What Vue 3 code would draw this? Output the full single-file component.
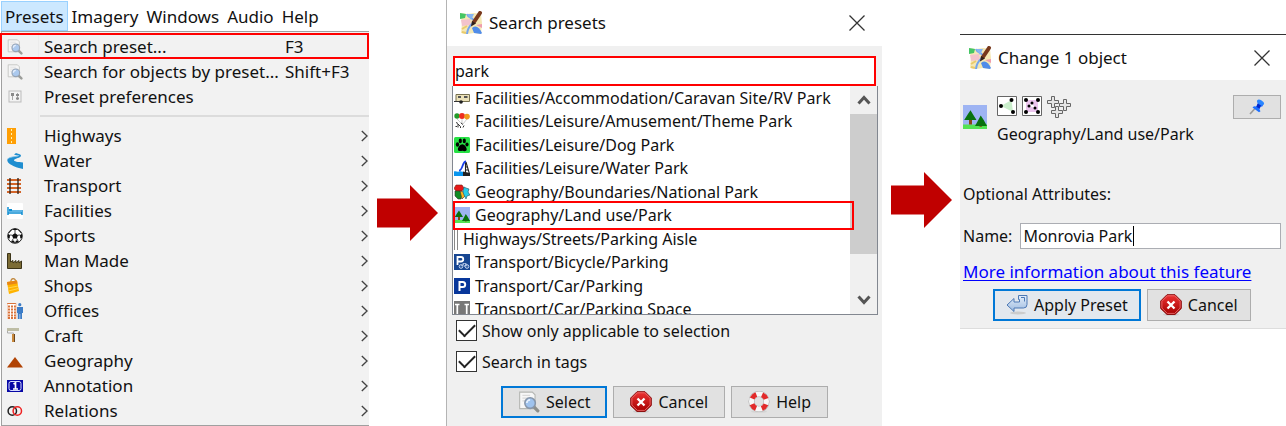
<script setup>
import { ref } from 'vue'

const menus = ['Presets', 'Imagery', 'Windows', 'Audio', 'Help']
const actions = [
  { label: 'Search preset...', key: 'F3', icon: 'search', marked: true },
  { label: 'Search for objects by preset...', key: 'Shift+F3', icon: 'search' },
  { label: 'Preset preferences', key: '', icon: 'prefs' },
]
const groups = [
  { label: 'Highways', icon: 'highway' },
  { label: 'Water', icon: 'water' },
  { label: 'Transport', icon: 'rail' },
  { label: 'Facilities', icon: 'bed' },
  { label: 'Sports', icon: 'ball' },
  { label: 'Man Made', icon: 'factory' },
  { label: 'Shops', icon: 'bag' },
  { label: 'Offices', icon: 'office' },
  { label: 'Craft', icon: 'roller' },
  { label: 'Geography', icon: 'peak' },
  { label: 'Annotation', icon: 'note' },
  { label: 'Relations', icon: 'rings' },
]
const results = [
  { label: 'Facilities/Accommodation/Caravan Site/RV Park', icon: 'caravan' },
  { label: 'Facilities/Leisure/Amusement/Theme Park', icon: 'balloons' },
  { label: 'Facilities/Leisure/Dog Park', icon: 'paw' },
  { label: 'Facilities/Leisure/Water Park', icon: 'slide' },
  { label: 'Geography/Boundaries/National Park', icon: 'national' },
  { label: 'Geography/Land use/Park', icon: 'park', marked: true },
  { label: 'Highways/Streets/Parking Aisle', icon: 'aisle' },
  { label: 'Transport/Bicycle/Parking', icon: 'bikepark' },
  { label: 'Transport/Car/Parking', icon: 'carpark' },
  { label: 'Transport/Car/Parking Space', icon: 'space' },
]

const query = ref('park')
const applicable = ref(true)
const inTags = ref(true)
const name = ref('Monrovia Park')
</script>

<template>
  <svg class="defs" aria-hidden="true">
    <defs>
      <linearGradient id="sea" x1="0" y1="0" x2="0" y2="1">
        <stop offset="0" stop-color="#e33" /><stop offset="1" stop-color="#a40000" />
      </linearGradient>
      <linearGradient id="steel" x1="0" y1="0" x2="0" y2="1">
        <stop offset="0" stop-color="#e4eefa" /><stop offset="1" stop-color="#9dbbe0" />
      </linearGradient>
      <symbol id="search" viewBox="0 0 20 20">
        <path d="M1.500 1H13l2.500 2.500V16H1.500z" fill="#f7f7f7" stroke="#b5b7b3" />
        <path d="M4 4h7M4 6.500h8M4 9h3" stroke="#dadada" />
        <path d="M14.500 14.500l3.500 3.500" stroke="#8d8f8b" stroke-width="3" stroke-linecap="round" />
        <circle cx="11" cy="11" r="4.800" fill="#9fc3ee" stroke="#8796aa" stroke-width="1.400" />
        <path d="M8 11a3 3 0 0 1 3-3" fill="none" stroke="#e6f1ff" stroke-width="1.500" />
      </symbol>
      <symbol id="prefs" viewBox="0 0 16 16">
        <rect x="2" y="2" width="12" height="11" fill="#f4f4f4" stroke="#b3b3b3" />
        <path d="M5.500 4v7M10.500 4v7" stroke="#999" />
        <path d="M4 4h3v3H4zM9 5h3v2H9zM9 8.500h3v2H9z" fill="#777" />
      </symbol>
      <symbol id="highway" viewBox="0 0 16 16">
        <path d="M0 0h9v16H0z" fill="#ff9f05" />
        <path d="M4.500 1v15" stroke="#fff3b0" stroke-dasharray="2 2" />
      </symbol>
      <symbol id="water" viewBox="0 0 16 16">
        <path d="M9 0 7 1.500C9 2.500 11 2 12 2.800 9 4 1 3.500.3 7 0 10 5 12.500 10 14.500l6 1.500V9.500C11 9 6.500 8.500 7 7c.8-1.800 7-1.800 7-4.500C13.500.8 10.500 1 9 0z" fill="#1f8ed0" />
        <path d="M.5 6C3 3.500 8 4 12 2.500" stroke="#7bc0e8" fill="none" stroke-width=".8" />
      </symbol>
      <symbol id="rail" viewBox="0 0 16 16">
        <path d="M0 2h14M0 6h14M0 10h14M0 14h14" stroke="#d36529" stroke-width="2" />
        <path d="M3 0v16M11 0v16" stroke="#2c1d15" stroke-width="1.300" />
      </symbol>
      <symbol id="bed" viewBox="0 0 16 16">
        <rect width="16" height="16" rx="1" fill="#fff" />
        <path d="M1 4v8M15 7v5M1 10h14" stroke="#0f8ed2" stroke-width="1.500" />
        <path d="M2 7h13v2H2z" fill="#5db4e4" /><path d="M2 6h3v2H2z" fill="#0f8ed2" />
      </symbol>
      <symbol id="ball" viewBox="0 0 16 16">
        <circle cx="8" cy="8" r="7.300" fill="#fff" stroke="#222" />
        <path d="M8 5l3 2.200-1.200 3.400H6.200L5 7.200zM5 1.200 8 2.500l3-1.300L8 .5zM1 6l2 1-.3 3.500L1 10zM15 6l-2 1 .3 3.500L15 10zM4 13l3-.5 1 2.500-3-.6zM12 13l-3-.5L8 15l3-.6z" fill="#111" />
        <path d="M8 5V2.500M5 7.200 3 7M11 7.200l2-.2M6.200 10.600 5 13M9.800 10.600 11 13M5 1.500 2 5M11 1.500 14 5" stroke="#222" stroke-width=".8" />
      </symbol>
      <symbol id="factory" viewBox="0 0 16 16">
        <path d="M.5.500h3V9L6 7.500V10l3-2.500V10l3-2.500V10l2.500-2v7.500H.5z" fill="#7c6c35" stroke="#3c3418" />
      </symbol>
      <symbol id="bag" viewBox="0 0 16 16">
        <path d="M4 5C3 0 8-1 9 4" fill="none" stroke="#c28a41" stroke-width="1.300" />
        <path d="M0 4l10-1.500L12 13 2 16z" fill="#ffb300" /><path d="M0 4l10-1.500.4 3L.5 7z" fill="#e88617" />
        <path d="M1 10l10-2M1.500 13l10-2.500" stroke="#ffd44c" />
      </symbol>
      <symbol id="office" viewBox="0 0 16 16">
        <path d="M0 0h9v16H0z" fill="#fff" />
        <path d="M0 .5h9" stroke="#d9733b" />
        <path d="M1 3.500h8M1 6.500h8M1 9.500h8M1 12.500h8M1 15h8" stroke="#d9733b" stroke-width="1.800" stroke-dasharray="2 1" />
        <path d="M.3 0v16M9 0v16" stroke="#e9a27a" stroke-width=".6" />
        <circle cx="12.800" cy="1.700" r="1.600" fill="#3c7cc7" /><path d="M10 4h6v6h-1v6h-1.800v-5h-.6v5h-1.800v-6H10z" fill="#3c7cc7" />
      </symbol>
      <symbol id="roller" viewBox="0 0 16 16">
        <path d="M0 0h12v3H0z" fill="#bebda5" /><path d="M.5 3v2h6v2" fill="none" stroke="#aaa" />
        <path d="M5 6h3v8H5z" fill="#c9893c" /><path d="M7 6h1v8H7z" fill="#69451e" />
      </symbol>
      <symbol id="peak" viewBox="0 0 16 16"><path d="M8 4l8 10.500H0z" fill="#b14304" /></symbol>
      <symbol id="note" viewBox="0 0 16 16">
        <path d="M0 2h16v12H0z" fill="#0707a5" />
        <rect x="2" y="3.500" width="12" height="9" rx="2" fill="none" stroke="#d8dcff" />
        <path d="M6.500 6 8.500 5v6M6 11h5" fill="none" stroke="#fff" stroke-width="1.700" />
      </symbol>
      <symbol id="rings" viewBox="0 0 16 16">
        <circle cx="5.300" cy="8" r="4.200" fill="none" stroke="#222" stroke-width="1.500" />
        <circle cx="10.300" cy="8" r="4.200" fill="none" stroke="#ef2222" stroke-width="1.500" />
      </symbol>
      <symbol id="caravan" viewBox="0 0 16 16">
        <path d="M2 4.500h13.500v7H2z" fill="#ebe1b8" stroke="#77704f" /><path d="M4 6h3v2H4zM10 6h3.500v2H10z" fill="#555" />
        <path d="M0 11.500h9" stroke="#333" /><circle cx="7" cy="12" r="1.800" fill="#222" />
      </symbol>
      <symbol id="balloons" viewBox="0 0 16 16">
        <path d="M3 6l4 4M8 6v4M13 6l-4 5" fill="none" stroke="#aaa" stroke-width=".6" />
        <circle cx="3" cy="3" r="2.700" fill="#239b2a" /><circle cx="8" cy="3" r="3" fill="#ed2e20" /><circle cx="13" cy="3.600" r="2.800" fill="#ee9c1c" />
        <path d="M2 9.500l2 1M4 14.500V11l2.500 2.500V15M7 10l2 1.500M1.500 13.500h1.500M9 14.500l1-2" fill="none" stroke="#333" />
      </symbol>
      <symbol id="paw" viewBox="0 0 16 16">
        <rect width="16" height="16" rx="1.500" fill="#26e044" />
        <ellipse cx="3.500" cy="7.500" rx="1.700" ry="2.200" /><ellipse cx="6.300" cy="3.900" rx="1.600" ry="2.300" /><ellipse cx="10.300" cy="3.900" rx="1.600" ry="2.300" /><ellipse cx="13" cy="7.500" rx="1.600" ry="2.100" />
        <path d="M8.300 7.200c2 0 4.400 3 4.400 5 0 2.500-2.700 2-4.400 1.600-1.600.4-4.400.7-4.400-1.600 0-2 2.400-5 4.400-5z" />
      </symbol>
      <symbol id="slide" viewBox="0 0 16 16">
        <path d="M12 2l3.500 12M11.500 2v11M12 7h2M12 10h2.500" fill="none" stroke="#222" stroke-width="1.100" />
        <path d="M5 10.500C9 10.500 8 1.500 12 1.500" fill="none" stroke="#183fe6" stroke-width="1.800" />
        <path d="M0 11.500c2-1 3 1 5 0s3 1 4 0V16H0z" fill="#0895ee" /><path d="M9 11.500l7 1.500v3H9z" fill="#222" />
      </symbol>
      <symbol id="national" viewBox="0 0 16 16">
        <path d="M2 1h6l2 3-2 3H2L0 4.500z" fill="#e51919" stroke="#721" stroke-width=".6" />
        <path d="M1 7h5l2 3-1 5H4L1 12z" fill="#108c24" stroke="#333" stroke-width=".6" />
        <path d="M6 7l4 1 1 4-3 3z" fill="#ffb21c" stroke="#333" stroke-width=".6" />
        <path d="M10 3l2 1 3 1-1 3 2 3-3 1-1 3-2-4-1-3z" fill="#27cce8" stroke="#256" stroke-width=".6" />
      </symbol>
      <symbol id="park" viewBox="0 0 16 16">
        <path d="M0 0h16v16H0z" fill="#9eb4f3" /><path d="M0 13h16v3H0z" fill="#53e353" />
        <path d="M4 9h2v4H4zM11 12h1.600v2.500H11z" fill="#8a4513" />
        <path d="M5 3.500l1.700 2.800L9 10H.8l2.300-3.700zM11.800 7l2 3L16 14H8l2.200-4z" fill="#08720e" />
      </symbol>
      <symbol id="aisle" viewBox="0 0 4 22"><path d="M.5 0v22M3.500 0v22" stroke="#888" /></symbol>
      <symbol id="bikepark" viewBox="0 0 16 16">
        <path d="M0 0h16v16H0z" fill="#174692" />
        <path d="M3.500 11V3H7a2 2 0 0 1 0 4.500H4" fill="none" stroke="#fff" stroke-width="1.800" />
        <circle cx="7" cy="12.500" r="1.800" fill="none" stroke="#c9d9f2" /><circle cx="13" cy="12.500" r="1.800" fill="none" stroke="#c9d9f2" />
        <path d="M7 12.500l2-3h3l1 3M9 9.500l1.500 3 1.500-3" fill="none" stroke="#c9d9f2" stroke-width=".7" />
      </symbol>
      <symbol id="carpark" viewBox="0 0 16 16">
        <path d="M0 0h16v16H0z" fill="#08379b" />
        <path d="M5.500 13V4h3.200a2.300 2.300 0 0 1 0 5H6" fill="none" stroke="#fff" stroke-width="2" />
      </symbol>
      <symbol id="space" viewBox="0 0 16 16">
        <path d="M0 0h16v16H0z" fill="#777" /><path d="M1 3.500h4.500M10.500 3.500H15M3.300 3v13M12.700 3v13" stroke="#fff" stroke-width="1.700" />
      </symbol>
      <symbol id="logo" viewBox="0 0 24 24">
        <path d="M1 2l7 1 7-1 7 1 1 9-1 11-7-1-7 1-6-1 1-10z" fill="#f5e8b4" />
        <path d="M1 2l6 1-1 4-5 1z" fill="#45c665" /><path d="M2 9l9-1 1 6-9 1z" fill="#f3c3cc" />
        <path d="M8 3c1 4 7 4 7 7s-6 3-7 13" fill="none" stroke="#72a4ee" stroke-width="2" />
        <path d="M8 3h7l-3 6z" fill="#86b4f0" />
        <path d="M13 17c4-3 7-1 10 5l-1 1-7-1z" fill="#508ce9" /><path d="M17 14l6-1v4z" fill="#ef9dac" />
        <path d="M3 18l5-3M3 21l4 1" stroke="#eacb6c" stroke-width="2" />
        <path d="M21 2 15 11" stroke="#78381c" stroke-width="4" stroke-linecap="round" /><path d="M13 10l4 2.500-5 3z" fill="#302019" />
      </symbol>
      <symbol id="close" viewBox="0 0 16 16"><path d="M.5.5l15 15M15.500.5l-15 15" stroke="#333" stroke-width="1.300" /></symbol>
      <symbol id="stop" viewBox="0 0 22 22">
        <ellipse cx="11" cy="20.500" rx="8" ry="1.300" fill="#ccc" />
        <path d="M7 .7h8l6.300 6.300v7.500L15 20.500H7L.7 14.500V7z" fill="url(#sea)" stroke="#8c1010" />
        <path d="M7.400 1.800h7.200l5.500 5.500v6.700l-5.500 5.400H7.400L1.900 14V7.300z" fill="none" stroke="#ee7474" stroke-width=".8" />
        <path d="M7.500 7.500l7 7M14.500 7.500l-7 7" stroke="#fff" stroke-width="2.300" />
      </symbol>
      <symbol id="buoy" viewBox="0 0 22 22">
        <ellipse cx="11" cy="20.500" rx="8" ry="1.300" fill="#d4d4d4" />
        <circle cx="11" cy="10.500" r="7.500" fill="none" stroke="#aaa" stroke-width="6" />
        <circle cx="11" cy="10.500" r="7.500" fill="none" stroke="#f7f7f7" stroke-width="5" />
        <circle cx="11" cy="10.500" r="7.500" fill="none" stroke="#e22a2a" stroke-width="5" stroke-dasharray="5.890" stroke-dashoffset="-2.950" />
      </symbol>
      <symbol id="enter" viewBox="0 0 22 22">
        <ellipse cx="12" cy="19" rx="8" ry="1.500" fill="#ccc" />
        <path d="M1 11 8 4.500V8h5.500V5.500H12.500V1.500H21V10.500a3.500 3.500 0 0 1-3.500 3.500H8v3.500z" fill="url(#steel)" stroke="#4d79b5" stroke-linejoin="round" />
        <path d="M15 3.500h3.500v4" fill="none" stroke="#4d79b5" />
      </symbol>
      <symbol id="pin" viewBox="0 0 16 16">
        <path d="M1 15l5-5.500" stroke="#999" stroke-width="1.600" />
        <path d="M8.500 1.500 14.500 5l-1.200 2.500-1.800.2-1 2.800 1 1.800-1.500 1L3.500 8.500 5 7.300l2 .2 1.800-2.400z" fill="#1c6fff" />
        <ellipse cx="11.500" cy="3.300" rx="3.800" ry="2.200" transform="rotate(30 11.500 3.300)" fill="#2b86ff" />
        <path d="M8.500 4.500l3.500 2-1.500 3-3-1.500z" fill="#0525c9" />
      </symbol>
      <symbol id="closedway" viewBox="0 0 20 20">
        <path d="M.5.5h19v19H.5z" fill="#fff" stroke="#666" /><path d="M4 10 14.500 4l1.500 12z" fill="#caeecb" />
        <circle cx="4" cy="10" r="2" /><circle cx="14.500" cy="4" r="2" /><circle cx="16" cy="16" r="2" />
      </symbol>
      <symbol id="multipolygon" viewBox="0 0 20 20">
        <path d="M.5.5h19v19H.5z" fill="#fff" stroke="#666" /><path d="M4 4h12v12H4z" fill="#ecc5ee" />
        <path d="M10 7l3 5-6-2z" fill="#fff" />
        <circle cx="4" cy="4" r="2" /><circle cx="16" cy="4" r="2" /><circle cx="4" cy="16" r="2" /><circle cx="16" cy="16" r="2" />
        <circle cx="10" cy="7" r="1.500" /><circle cx="7" cy="10" r="1.500" /><circle cx="13" cy="12" r="1.500" />
      </symbol>
      <symbol id="crosses" viewBox="0 0 24 22">
        <g fill="#e6e6e6" stroke="#666">
          <path d="M4.500.5h3v4h4v3h-4v4h-3v-4h-4v-3h4z" />
          <path d="M16.500 3.500h3v4h4v3h-4v4h-3v-4h-4v-3h4z" />
          <path d="M8.500 10.500h3v4h4v3h-4v4h-3v-4h-4v-3h4z" />
        </g>
      </symbol>
    </defs>
  </svg>

  <main class="stage">
    <section class="app-menu">
      <nav class="menubar">
        <button v-for="(m, i) in menus" :key="m" type="button" :class="{ open: i === 0 }">{{ m }}</button>
      </nav>
      <div class="menu" role="menu">
        <button v-for="a in actions" :key="a.label" type="button" role="menuitem" class="item" :class="{ marked: a.marked }">
          <svg class="i16 faded"><use :href="'#' + a.icon" /></svg>
          <span class="label">{{ a.label }}</span>
          <span class="key">{{ a.key }}</span>
        </button>
        <hr />
        <button v-for="g in groups" :key="g.label" type="button" role="menuitem" class="item">
          <svg class="i16"><use :href="'#' + g.icon" /></svg>
          <span class="label">{{ g.label }}</span>
          <svg class="more" viewBox="0 0 6 10"><path d="M.7.700 5.200 5 .7 9.300" fill="none" stroke="#444" stroke-width="1.200" /></svg>
        </button>
      </div>
    </section>

    <svg class="arrow" viewBox="0 0 61 56"><path d="M0 13.500h33V0l28 28-28 28V42.500H0z" fill="#c00000" /></svg>

    <section class="dialog search" aria-label="Search presets">
      <header class="title">
        <svg class="i24"><use href="#logo" /></svg>
        <h2>Search presets</h2>
        <button type="button" class="close" aria-label="Close"><svg><use href="#close" /></svg></button>
      </header>
      <div class="body">
        <input v-model="query" class="query" type="text" aria-label="Search presets" />
        <div class="listbox">
          <ul role="listbox" aria-label="Presets">
            <li v-for="r in results" :key="r.label" role="option" :aria-selected="!!r.marked" :class="{ marked: r.marked }">
              <svg :class="r.icon === 'aisle' ? 'thin' : 'i16'"><use :href="'#' + r.icon" /></svg>
              <span>{{ r.label }}</span>
            </li>
          </ul>
          <div class="scroll">
            <button type="button" aria-label="Scroll up"><svg viewBox="0 0 14 10"><path d="M1.500 8.500 7 2.500l5.500 6" fill="none" stroke="#555" stroke-width="3" /></svg></button>
            <div class="thumb"></div>
            <button type="button" class="down" aria-label="Scroll down"><svg viewBox="0 0 14 10"><path d="M1.500 1.500 7 7.500l5.500-6" fill="none" stroke="#555" stroke-width="3" /></svg></button>
          </div>
        </div>
        <label class="check"><input v-model="applicable" type="checkbox" />Show only applicable to selection</label>
        <label class="check"><input v-model="inTags" type="checkbox" />Search in tags</label>
        <footer class="buttons">
          <button type="button" class="push primary"><svg><use href="#search" /></svg>Select</button>
          <button type="button" class="push"><svg><use href="#stop" /></svg>Cancel</button>
          <button type="button" class="push"><svg><use href="#buoy" /></svg>Help</button>
        </footer>
      </div>
    </section>

    <svg class="arrow second" viewBox="0 0 61 56"><path d="M0 13.500h33V0l28 28-28 28V42.500H0z" fill="#c00000" /></svg>

    <section class="dialog change" aria-label="Change 1 object">
      <header class="title">
        <svg class="i24"><use href="#logo" /></svg>
        <h2>Change 1 object</h2>
        <button type="button" class="close" aria-label="Close"><svg><use href="#close" /></svg></button>
      </header>
      <div class="body">
        <div class="preset">
          <svg class="i24"><use href="#park" /></svg>
          <div class="about">
            <div class="types">
              <svg class="i20"><use href="#closedway" /></svg>
              <svg class="i20"><use href="#multipolygon" /></svg>
              <svg class="cross"><use href="#crosses" /></svg>
            </div>
            <p>Geography/Land use/Park</p>
          </div>
          <button type="button" class="pin" aria-label="Pin"><svg class="i16"><use href="#pin" /></svg></button>
        </div>
        <p class="optional">Optional Attributes:</p>
        <div class="field">
          <label for="name">Name:</label>
          <div class="entry">
            <input id="name" v-model="name" type="text" />
            <i class="caret"></i>
          </div>
        </div>
        <a href="#more" class="info">More information about this feature</a>
        <footer class="buttons">
          <button type="button" class="push primary"><svg><use href="#enter" /></svg>Apply Preset</button>
          <button type="button" class="push"><svg><use href="#stop" /></svg>Cancel</button>
        </footer>
      </div>
    </section>
  </main>
</template>

<style>
body { background: #fff; }
</style>

<style scoped>
* { box-sizing: border-box; }
.defs { position: absolute; width: 0; height: 0; }
button, input { font: inherit; color: inherit; margin: 0; padding: 0; border: 0; background: none; border-radius: 0; outline: none; }
h2, p, ul { margin: 0; padding: 0; }
svg { display: block; flex: none; }
.i16 { width: 16px; height: 16px; }
.i20 { width: 20px; height: 20px; }
.i24 { width: 24px; height: 24px; }

.stage {
  display: grid;
  grid-template-columns: minmax(0, 369fr) 61px minmax(0, 437fr) 61px minmax(0, 326fr);
  gap: 8px;
  align-items: start;
  font: 16px/24px "Noto Sans", "Open Sans", sans-serif;
  color: #111;
  overflow: hidden;
}

.app-menu { padding-left: 1px; font-size: 17px; }
.menubar { display: flex; height: 32px; padding-top: 1px; border-bottom: 1px solid #a0a0a0; }
.menubar button { height: 30px; padding: 0 3px; border: 1px solid transparent; line-height: 30px; }
.menubar .open { background: #cce8ff; border-color: #99d1ff; }
.menu {
  padding: 2px 0;
  border: solid #a0a0a0;
  border-width: 0 0 1px 1px;
  background: linear-gradient(90deg, #f2f2f2 36px, #ececec 36px 37px, #f2f2f2 37px);
}
.item { display: flex; align-items: center; width: 100%; height: 25px; padding: 0 1px 0 5px; text-align: left; position: relative; }
.label { flex: 1; margin-left: 21px; white-space: nowrap; }
.key { width: 83px; white-space: nowrap; }
.more { width: 7px; height: 12px; }
.faded { opacity: .85; }
.marked::after { content: ""; position: absolute; inset: -1px 0 0 -2px; border: 2px solid #f00; pointer-events: none; }
hr { height: 2px; margin: 6px 0 6px 38px; border: 0; background: #dcdcdc; }

.arrow { width: 61px; height: 56px; margin-top: 185px; }
.second { margin-top: 172px; }

.title { display: flex; align-items: center; height: 46px; background: #fff; padding: 0 17px 0 12px; }
.title h2 { flex: 1; margin-left: 6px; font-size: 17px; font-weight: 400; }
.close svg { width: 16px; height: 16px; }
.dialog .body { background: #f0f0f0; }

.search { margin-right: 1px; border-left: 1px solid #b4b4b4; }
.search .body { padding: 10px 4px 8px 5px; }
.query { display: block; width: calc(100% - 3px); height: 30px; margin-left: 1px; border: 2px solid #f00; background: #fff; }
.listbox { display: flex; height: 229px; border: solid #828790; border-width: 0 1px 1px; background: #fff; overflow: hidden; }
ul { flex: 1; display: grid; grid-template-rows: repeat(10, minmax(0, 1fr)); height: 235px; list-style: none; min-width: 0; line-height: 22px; }
li { display: flex; align-items: center; gap: 5px; padding-left: 1px; white-space: nowrap; position: relative; }
li.marked::after { inset: -3px -4px -3px 0; z-index: 1; }
.thin { width: 4px; height: 22px; }
.scroll { display: flex; flex-direction: column; width: 27px; background: #f0f0f0; }
.scroll button { height: 28px; display: grid; place-items: center; }
.scroll svg { width: 14px; height: 10px; }
.thumb { height: 140px; background: #cdcdcd; }
.scroll .down { margin-top: auto; }
.check { display: flex; align-items: center; gap: 5px; height: 31px; margin-left: 4px; }
.check input { appearance: none; width: 21px; height: 21px; border: 1px solid #333; background: #fff; display: grid; place-items: center; }
.check input:checked::before { content: ""; width: 14px; height: 7px; border: solid #222; border-width: 0 0 2px 2px; rotate: -45deg; translate: 0 -2px; }
.buttons { display: flex; gap: 6px; }
.search .buttons { padding: 9px 0 0 49px; }
.push { display: flex; align-items: center; gap: 6px; height: 32px; padding: 0 16px; border: 1px solid #adadad; background: #e1e1e1; white-space: nowrap; }
.push.primary { border: 2px solid #0078d7; padding: 0 15px; }
.push svg { width: 22px; height: 22px; }

.change { margin-top: 34px; border-top: 1px solid #333; border-bottom: 1px solid #ddd; }
.change .title { height: 45px; padding: 0 16px 0 8px; }
.change .body { padding: 15px 5px 7px 3px; }
.preset { display: flex; align-items: flex-start; }
.preset > .i24 { margin-top: 10px; }
.about { flex: 1; margin-left: 10px; }
.types { display: flex; gap: 5px; height: 27px; padding-top: 1px; }
.cross { width: 24px; height: 22px; }
.pin { display: grid; place-items: center; width: 48px; height: 24px; border: 1px solid #adadad; background: #e1e1e1; }
.optional { margin-top: 36px; }
.field { display: flex; align-items: center; gap: 8px; margin-top: 17px; }
.entry { flex: 1; position: relative; }
.entry input { display: block; width: 100%; height: 26px; padding: 0 2px; border: 1px solid #abadb3; background: #fff; }
.caret { position: absolute; left: 113px; top: 3px; width: 1px; height: 20px; background: #000; }
.info { display: block; margin-top: 11px; font-size: 17px; color: #00f; white-space: nowrap; text-underline-offset: 2px; }
.change .buttons { padding: 5px 0 0 30px; }
.change .push { padding: 0 12px; }
.change .primary { padding: 0 11px; background: #e3e8ee; }
</style>
